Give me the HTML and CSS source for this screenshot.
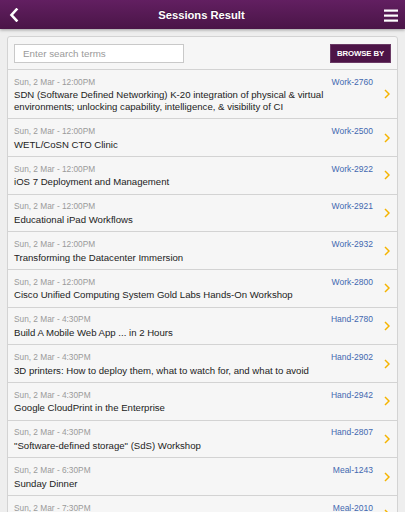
FILE: index.html
```html
<!DOCTYPE html>
<html>
<head>
<meta charset="utf-8">
<link rel="stylesheet" href="styles.css">
</head>
<body>
<header class="topbar">
  <svg class="back" width="10" height="14" viewBox="0 0 10 14"><polyline points="7.5,1.5 2.5,7 7.5,12.5" fill="none" stroke="#fff" stroke-width="2.6" stroke-linecap="square"/></svg>
  <h1 class="title">Sessions Result</h1>
  <svg class="menu" width="14" height="13" viewBox="0 0 14 13"><rect x="0" y="0.5" width="14" height="2.2" fill="#fff"/><rect x="0" y="5.5" width="14" height="2.2" fill="#fff"/><rect x="0" y="10.5" width="14" height="2.2" fill="#fff"/></svg>
</header>
<main class="page">
  <section class="card">
    <div class="searchbar">
      <input class="search" type="text" placeholder="Enter search terms">
      <button class="browse">BROWSE BY</button>
    </div>
    <ul class="list">
      <li class="row"><div class="info"><div class="meta"><span class="date">Sun, 2 Mar - 12:00PM</span><span class="code">Work-2760</span></div><div class="name">SDN (Software Defined Networking) K-20 integration of physical &amp; virtual environments; unlocking capability, intelligence, &amp; visibility of CI</div></div><svg class="chev" width="6" height="10" viewBox="0 0 6 10"><polyline points="1,1 5,5 1,9" fill="none" stroke="#f5b400" stroke-width="1.5"/></svg></li>
      <li class="row"><div class="info"><div class="meta"><span class="date">Sun, 2 Mar - 12:00PM</span><span class="code">Work-2500</span></div><div class="name">WETL/CoSN CTO Clinic</div></div><svg class="chev" width="6" height="10" viewBox="0 0 6 10"><polyline points="1,1 5,5 1,9" fill="none" stroke="#f5b400" stroke-width="1.5"/></svg></li>
      <li class="row"><div class="info"><div class="meta"><span class="date">Sun, 2 Mar - 12:00PM</span><span class="code">Work-2922</span></div><div class="name">iOS 7 Deployment and Management</div></div><svg class="chev" width="6" height="10" viewBox="0 0 6 10"><polyline points="1,1 5,5 1,9" fill="none" stroke="#f5b400" stroke-width="1.5"/></svg></li>
      <li class="row"><div class="info"><div class="meta"><span class="date">Sun, 2 Mar - 12:00PM</span><span class="code">Work-2921</span></div><div class="name">Educational iPad Workflows</div></div><svg class="chev" width="6" height="10" viewBox="0 0 6 10"><polyline points="1,1 5,5 1,9" fill="none" stroke="#f5b400" stroke-width="1.5"/></svg></li>
      <li class="row"><div class="info"><div class="meta"><span class="date">Sun, 2 Mar - 12:00PM</span><span class="code">Work-2932</span></div><div class="name">Transforming the Datacenter Immersion</div></div><svg class="chev" width="6" height="10" viewBox="0 0 6 10"><polyline points="1,1 5,5 1,9" fill="none" stroke="#f5b400" stroke-width="1.5"/></svg></li>
      <li class="row"><div class="info"><div class="meta"><span class="date">Sun, 2 Mar - 12:00PM</span><span class="code">Work-2800</span></div><div class="name">Cisco Unified Computing System Gold Labs Hands-On Workshop</div></div><svg class="chev" width="6" height="10" viewBox="0 0 6 10"><polyline points="1,1 5,5 1,9" fill="none" stroke="#f5b400" stroke-width="1.5"/></svg></li>
      <li class="row"><div class="info"><div class="meta"><span class="date">Sun, 2 Mar - 4:30PM</span><span class="code">Hand-2780</span></div><div class="name">Build A Mobile Web App ... in 2 Hours</div></div><svg class="chev" width="6" height="10" viewBox="0 0 6 10"><polyline points="1,1 5,5 1,9" fill="none" stroke="#f5b400" stroke-width="1.5"/></svg></li>
      <li class="row"><div class="info"><div class="meta"><span class="date">Sun, 2 Mar - 4:30PM</span><span class="code">Hand-2902</span></div><div class="name">3D printers: How to deploy them, what to watch for, and what to avoid</div></div><svg class="chev" width="6" height="10" viewBox="0 0 6 10"><polyline points="1,1 5,5 1,9" fill="none" stroke="#f5b400" stroke-width="1.5"/></svg></li>
      <li class="row"><div class="info"><div class="meta"><span class="date">Sun, 2 Mar - 4:30PM</span><span class="code">Hand-2942</span></div><div class="name">Google CloudPrint in the Enterprise</div></div><svg class="chev" width="6" height="10" viewBox="0 0 6 10"><polyline points="1,1 5,5 1,9" fill="none" stroke="#f5b400" stroke-width="1.5"/></svg></li>
      <li class="row"><div class="info"><div class="meta"><span class="date">Sun, 2 Mar - 4:30PM</span><span class="code">Hand-2807</span></div><div class="name">"Software-defined storage" (SdS) Workshop</div></div><svg class="chev" width="6" height="10" viewBox="0 0 6 10"><polyline points="1,1 5,5 1,9" fill="none" stroke="#f5b400" stroke-width="1.5"/></svg></li>
      <li class="row"><div class="info"><div class="meta"><span class="date">Sun, 2 Mar - 6:30PM</span><span class="code">Meal-1243</span></div><div class="name">Sunday Dinner</div></div><svg class="chev" width="6" height="10" viewBox="0 0 6 10"><polyline points="1,1 5,5 1,9" fill="none" stroke="#f5b400" stroke-width="1.5"/></svg></li>
      <li class="row"><div class="info"><div class="meta"><span class="date">Sun, 2 Mar - 7:30PM</span><span class="code">Meal-2010</span></div><div class="name">Sunday Evening Reception</div></div><svg class="chev" width="6" height="10" viewBox="0 0 6 10"><polyline points="1,1 5,5 1,9" fill="none" stroke="#f5b400" stroke-width="1.5"/></svg></li>
    </ul>
  </section>
</main>
</body>
</html>
```
FILE: styles.css
```css
* { box-sizing: border-box; }
html, body { margin: 0; padding: 0; }
body {
  background: #eeeeee;
  font-family: "Liberation Sans", Arial, sans-serif;
  overflow: hidden;
}
.topbar {
  height: 29px;
  display: flex;
  align-items: center;
  justify-content: space-between;
  padding: 0 7px 0 9px;
  background: linear-gradient(#621f61, #4a1547);
  box-shadow: 0 1px 3px rgba(0,0,0,0.35);
  position: relative;
}
.back { display: block; margin-top: 1px; }
.menu { display: block; margin-top: 1px; }
.title {
  margin: 0;
  color: #fff;
  font-size: 11.2px;
  font-weight: bold;
  text-shadow: 0 -1px 0 rgba(0,0,0,0.3);
}
.page { padding: 7px 7px 0 7px; }
.card {
  background: #f6f6f6;
  border: 1px solid #d3d3d3;
  border-radius: 3px 3px 0 0;
}
.searchbar {
  display: flex;
  justify-content: space-between;
  align-items: center;
  padding: 7px 6px 6px 6px;
  border-bottom: 1px solid #d3d3d3;
}
.search {
  width: 170px;
  height: 19px;
  border: 1px solid #c9c9c9;
  background: #fff;
  padding: 0 8px;
  font-family: "Liberation Sans", Arial, sans-serif;
  font-size: 9.8px;
  outline: none;
}
.search::placeholder { color: #9a9a9a; }
.browse {
  width: 61px;
  height: 19px;
  padding: 0;
  background: #4d1447;
  border: 1px solid #6a3a65;
  color: #fff;
  font-family: "Liberation Sans", Arial, sans-serif;
  font-size: 7.8px;
  font-weight: bold;
  letter-spacing: -0.1px;
}
.list { list-style: none; margin: 0; padding: 0; }
.row {
  display: flex;
  align-items: center;
  padding: 5.7px 7px 5.7px 6px;
  border-bottom: 1px solid #d3d3d3;
}
.info { flex: 1; min-width: 0; padding-right: 4px; }
.meta {
  display: flex;
  justify-content: space-between;
  line-height: 12px;
  font-size: 8.3px;
}
.date { color: #9a9a9a; }
.code { color: #4268b0; font-size: 8.5px; }
.name {
  margin-top: 1.8px;
  font-size: 9.6px;
  line-height: 11.5px;
  color: #222;
  padding-right: 8px;
}
.chev { display: block; flex: none; margin-left: 7px; }
```
